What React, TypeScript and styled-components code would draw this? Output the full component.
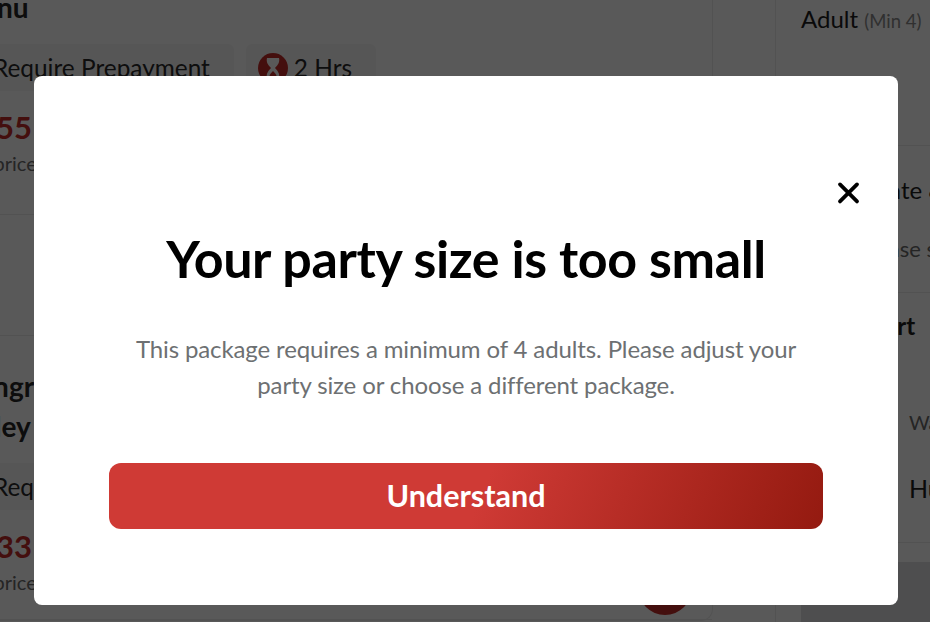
import React from "react";
import styled, { createGlobalStyle } from "styled-components";

const Global = createGlobalStyle`
  html, body { margin: 0; padding: 0; background: #fff; overflow: hidden; }
  body { font-family: "Lato", "Liberation Sans", sans-serif; }
`;

const Page = styled.div`
  width: 930px;
  height: 622px;
  display: flex;
  overflow: hidden;
  background: #fff;
`;

const LeftColumn = styled.main`
  width: 752px;
  margin: -13px 0 0 -40px;
  flex: none;
  height: 633px;
  border-right: 1px solid #ececec;
  border-bottom: 1px solid #ececec;
  border-bottom-right-radius: 12px;
`;

const Gutter = styled.div`
  width: 62px;
  flex: none;
  border-right: 1px solid #ececec;
`;

const RightColumn = styled.aside`
  flex: 1;
  min-width: 0;
  display: flex;
  flex-direction: column;
  height: 622px;
`;

const Card = styled.section<{ $height: number; $top: number }>`
  height: ${(p) => p.$height}px;
  padding-top: ${(p) => p.$top}px;
  box-sizing: border-box;
  border-bottom: 1px solid #ececec;
  white-space: nowrap;
`;

const CardTitle = styled.h2`
  margin: 0 0 0 -4px;
  font-size: 28px;
  line-height: 40px;
  font-weight: 700;
  color: #262626;
`;

const Chips = styled.div`
  display: flex;
  gap: 12px;
  margin-top: 17px;
  margin-left: 21px;
`;

const Chip = styled.div`
  height: 47px;
  padding: 0 24px 0 12px;
  border-radius: 6px;
  background: #f7f7f7;
  display: flex;
  align-items: center;
  gap: 6px;
  font-size: 24.4px;
  color: #2a2a2a;
`;

const PriceRow = styled.div`
  margin-top: 18px;
  display: flex;
  justify-content: space-between;
  padding-right: 20px;
`;

const Price = styled.div`
  font-size: 31px;
  line-height: 36px;
  font-weight: 700;
  color: #c42d2a;
`;

const PriceNote = styled.div`
  font-size: 20px;
  line-height: 26px;
  margin-top: 5px;
  color: #6b6b6b;
`;

const AddButton = styled.div`
  width: 54px;
  height: 54px;
  margin-top: 33px;
  border-radius: 50%;
  background: #c42d2a;
`;

const Section = styled.div<{ $height: number; $pad: number; $line?: boolean }>`
  height: ${(p) => p.$height}px;
  flex: none;
  box-sizing: border-box;
  padding: ${(p) => p.$pad}px 0 0 25px;
  white-space: nowrap;
  overflow: hidden;
  border-bottom: ${(p) => (p.$line ? "1px solid #ececec" : "none")};
`;

const SectionTitle = styled.div<{ $bold?: boolean }>`
  font-size: 24px;
  line-height: 32px;
  font-weight: ${(p) => (p.$bold ? 700 : 400)};
  color: #1e1e1e;
`;

const Muted = styled.span`
  font-size: 18.5px;
  color: #8a8a8a;
`;

const Hint = styled.div<{ $indent: number; $top: number; $size: number; $dark?: boolean }>`
  font-size: ${(p) => p.$size}px;
  line-height: 30px;
  margin-top: ${(p) => p.$top}px;
  margin-left: ${(p) => p.$indent}px;
  color: ${(p) => (p.$dark ? "#1e1e1e" : "#6a6a6a")};
`;

const FooterBar = styled.div`
  flex: 1;
  margin: 19px 0 0 25px;
  background: #dfe0e3;
`;

const Overlay = styled.div`
  position: fixed;
  inset: 0;
  background: rgba(0, 0, 0, 0.65);
  padding: 76px 0 0 34px;
  box-sizing: border-box;
`;

const Modal = styled.div`
  position: relative;
  width: 864px;
  height: 529px;
  box-sizing: border-box;
  background: #fff;
  border-radius: 8px;
  padding: 147px 75px 0;
  display: flex;
  flex-direction: column;
  align-items: center;
`;

const CloseButton = styled.button`
  position: absolute;
  top: 105px;
  right: 37px;
  width: 24px;
  height: 24px;
  padding: 0;
  border: 0;
  background: none;
  display: flex;
`;

const Title = styled.h1`
  margin: 0;
  font-size: 52px;
  line-height: 70px;
  font-weight: 700;
  letter-spacing: -0.38px;
  color: #000;
  white-space: nowrap;
`;

const Body = styled.p`
  margin: 38px 0 0;
  width: 700px;
  text-align: center;
  font-size: 24px;
  line-height: 36px;
  letter-spacing: -0.12px;
  color: #6d7072;
`;

const PrimaryButton = styled.button`
  margin-top: 60px;
  width: 714px;
  height: 66px;
  flex: none;
  border: 0;
  border-radius: 12px;
  padding: 0 0 2px;
  background: linear-gradient(112deg, #cf3a35 0%, #cf3a35 52%, #941a10 100%);
  color: #fff;
  font-family: inherit;
  font-size: 30.5px;
  font-weight: 700;
`;

const Hourglass = () => (
  <svg width="30" height="30" viewBox="0 0 30 30">
    <circle cx="15" cy="15" r="15" fill="#c42d2a" />
    <path
      d="M9 5h12c1 4-1 7-4 10 3 3 5 6 4 10H9c-1-4 1-7 4-10-3-3-5-6-4-10z"
      fill="#fff"
    />
    <path d="M15 18c2 2 3.500 3.500 3.500 5.500h-7c0-2 1.500-3.500 3.500-5.500z" fill="#c42d2a" />
  </svg>
);

export default function App() {
  return (
    <Page>
      <Global />
      <LeftColumn>
        <Card $height={228} $top={0}>
          <CardTitle>Menu</CardTitle>
          <Chips>
            <Chip>Require Prepayment</Chip>
            <Chip>
              <Hourglass />2 Hrs
            </Chip>
          </Chips>
          <PriceRow>
            <div>
              <Price>$155</Price>
              <PriceNote>Set price</PriceNote>
            </div>
          </PriceRow>
        </Card>
        <Card $height={121} $top={0} />
        <Card $height={284} $top={30}>
          <CardTitle>Hungry</CardTitle>
          <CardTitle>Valley</CardTitle>
          <Chips>
            <Chip>Require Prepayment</Chip>
          </Chips>
          <PriceRow>
            <div>
              <Price>$133</Price>
              <PriceNote>Set price</PriceNote>
            </div>
            <AddButton />
          </PriceRow>
        </Card>
      </LeftColumn>
      <Gutter />
      <RightColumn>
        <Section $height={146} $pad={3} $line>
          <SectionTitle>
            Adult <Muted>(Min 4)</Muted>
          </SectionTitle>
        </Section>
        <Section $height={147} $pad={28} $line>
          <SectionTitle>Select Date &amp; Time</SectionTitle>
          <Hint $indent={0} $top={28} $size={22}>
            Date: Please select
          </Hint>
        </Section>
        <Section $height={250} $pad={17} $line>
          <SectionTitle $bold>Party Start</SectionTitle>
          <Hint $indent={108} $top={65} $size={20}>
            Water
          </Hint>
          <Hint $indent={108} $top={36} $size={25} $dark>
            Hungry
          </Hint>
        </Section>
        <FooterBar />
      </RightColumn>
      <Overlay>
        <Modal>
          <CloseButton aria-label="Close">
            <svg width="24" height="24" viewBox="0 0 24 24">
              <path
                d="M3 3.400L20 20.400M20 3.400L3 20.400"
                stroke="#000"
                strokeWidth="3.8"
                strokeLinecap="round"
                fill="none"
              />
            </svg>
          </CloseButton>
          <Title>Your party size is too small</Title>
          <Body>
            This package requires a minimum of 4 adults. Please adjust your party size or
            choose a different package.
          </Body>
          <PrimaryButton>Understand</PrimaryButton>
        </Modal>
      </Overlay>
    </Page>
  );
}
